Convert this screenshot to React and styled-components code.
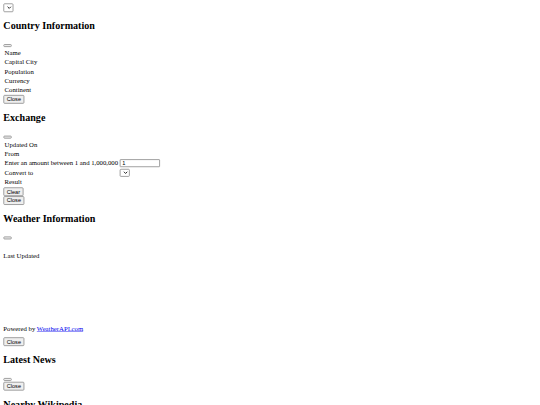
import styled, { createGlobalStyle } from "styled-components";

const GlobalStyle = createGlobalStyle`
  body {
    margin: 0;
    background: #fff;
    overflow: hidden;
  }
`;

// the whole page is shown scaled down (wide page in a 540px frame)
const Page = styled.div`
  width: 1286px;
  transform: scale(0.42);
  transform-origin: 0 0;
  padding: 8px;
  box-sizing: border-box;
  font-family: "Liberation Serif", "Times New Roman", serif;
  font-size: 16px;
  color: #000;
`;

const Heading = styled.h2`
  font-size: 1.5em;
  font-weight: bold;
  margin: 0.83em 0;
`;

const Button = styled.button`
  font: 13.333px "Liberation Sans", Arial, sans-serif;
  color: #000;
  background: #efefef;
  border: 2px solid #8f8f8f;
  border-radius: 3px;
  padding: 1px 6px;
`;

const IconButton = styled(Button)`
  width: 20px;
  height: 7px;
  padding: 0;
  vertical-align: baseline;
`;

const Select = styled.select`
  box-sizing: border-box;
  width: 24px;
  height: ${(p) => p.$h || "19px"};
  border: 2px solid #8f8f8f;
  border-radius: 3px;
  background: #fff;
  font: 13.333px "Liberation Sans", Arial, sans-serif;
`;

const Input = styled.input`
  box-sizing: border-box;
  width: 96px;
  height: 19px;
  padding: 1px 4px;
  border: 2px solid #8f8f8f;
  border-radius: 2px;
  font: 13.333px "Liberation Sans", Arial, sans-serif;
`;

const InfoTable = styled.table`
  border-collapse: separate;
  border-spacing: 2px;
`;

const Cell = styled.td`
  padding: 1px;
`;

const Para = styled.p`
  margin: ${(p) => p.$top || "1em"} 0 ${(p) => p.$bottom || "1em"};
`;

const WeatherBox = styled.div`
  height: 124px;
`;

const Link = styled.a`
  color: #0000ee;
  text-decoration: underline;
`;

const Block = styled.div``;

const country = ["Name", "Capital City", "Population", "Currency", "Continent"];

const App = () => {
  return (
    <>
      <GlobalStyle />
      <Page>
        <Block>
          <Select $h="21px"></Select>
        </Block>

        <Heading>Country Information</Heading>
        <Block>
          <IconButton />
        </Block>
        <InfoTable>
          <tbody>
            {country.map((label) => (
              <tr key={label}>
                <Cell>{label}</Cell>
              </tr>
            ))}
          </tbody>
        </InfoTable>
        <Block>
          <Button>Close</Button>
        </Block>

        <Heading>Exchange</Heading>
        <Block>
          <IconButton />
        </Block>
        <InfoTable>
          <tbody>
            <tr>
              <Cell>Updated On</Cell>
            </tr>
            <tr>
              <Cell>From</Cell>
            </tr>
            <tr>
              <Cell>Enter an amount between 1 and 1,000,000</Cell>
              <Cell>
                <Input type="text" defaultValue="1" />
              </Cell>
            </tr>
            <tr>
              <Cell>Convert to</Cell>
              <Cell>
                <Select></Select>
              </Cell>
            </tr>
            <tr>
              <Cell>Result</Cell>
            </tr>
          </tbody>
        </InfoTable>
        <Block>
          <Button>Clear</Button>
        </Block>
        <Block>
          <Button>Close</Button>
        </Block>

        <Heading>Weather Information</Heading>
        <Block>
          <IconButton />
        </Block>
        <Para $top="28px">Last Updated</Para>
        <WeatherBox />
        <Para $bottom="11px">
          Powered by <Link href="#">WeatherAPI.com</Link>
        </Para>
        <Block>
          <Button>Close</Button>
        </Block>

        <Heading>Latest News</Heading>
        <Block>
          <IconButton />
        </Block>
        <Block>
          <Button>Close</Button>
        </Block>

        <Heading>Nearby Wikipedia</Heading>
        <Block>
          <IconButton />
        </Block>
        <Block>
          <Button>Close</Button>
        </Block>
      </Page>
    </>
  );
};

export default App;
